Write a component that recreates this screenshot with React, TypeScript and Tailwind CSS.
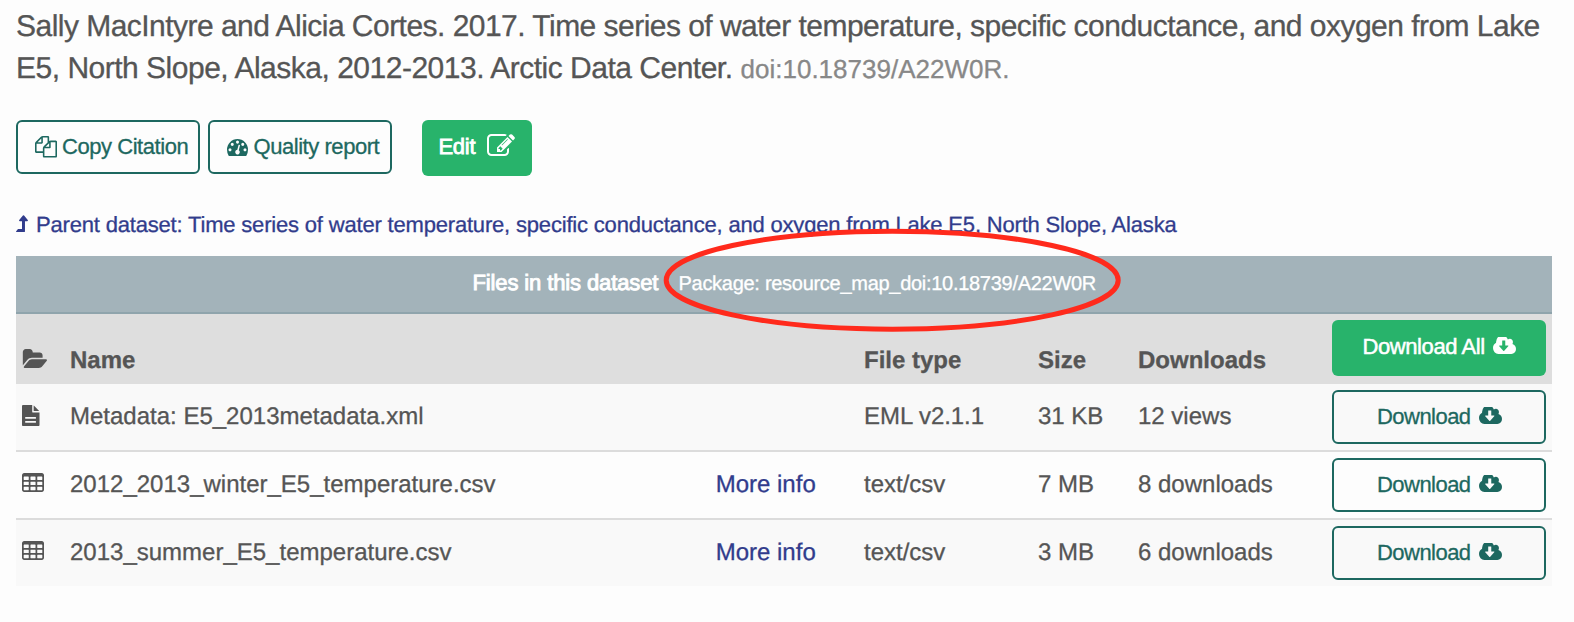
import React from 'react';

type GlyphProps = { box: string; className: string; d: string };

function Glyph({ box, className, d }: GlyphProps) {
  return (
    <svg viewBox={box} preserveAspectRatio="none" className={`block shrink-0 ${className}`} fill="currentColor" aria-hidden="true">
      <path d={d} />
    </svg>
  );
}

const COPY =
  'M1696 384q40 0 68 28t28 68v1216q0 40-28 68t-68 28h-960q-40 0-68-28t-28-68v-288h-544q-40 0-68-28t-28-68v-672q0-40 20-88t48-76l408-408q28-28 76-48t88-20h416q40 0 68 28t28 68v328q68-40 128-40h416zm-544 213l-299 299h299v-299zm-640-384l-299 299h299v-299zm196 647l316-316v-416h-384v416q0 40-28 68t-68 28h-416v640h512v-256q0-40 20-88t48-76zm956 804v-1152h-384v416q0 40-28 68t-68 28h-416v640h896z';
const GAUGE =
  'M384 1152q0-53-37.5-90.5t-90.5-37.5-90.5 37.5-37.5 90.5 37.5 90.5 90.5 37.5 90.5-37.5 37.5-90.5zm192-448q0-53-37.5-90.5t-90.5-37.5-90.5 37.5-37.5 90.5 37.5 90.5 90.5 37.5 90.5-37.5 37.5-90.5zm428 481l101-382q6-26-7.5-48.5t-38.5-29.5-48 6.5-30 39.5l-101 382q-60 5-107 43.5t-63 98.5q-20 77 20 146t117 89 146-20 89-117q16-60-6-117t-72-91zm660-33q0-53-37.5-90.5t-90.5-37.5-90.5 37.5-37.5 90.5 37.5 90.5 90.5 37.5 90.5-37.5 37.5-90.5zm-640-640q0-53-37.5-90.5t-90.5-37.5-90.5 37.5-37.5 90.5 37.5 90.5 90.5 37.5 90.5-37.5 37.5-90.5zm448 192q0-53-37.5-90.5t-90.5-37.5-90.5 37.5-37.5 90.5 37.5 90.5 90.5 37.5 90.5-37.5 37.5-90.5zm320 448q0 261-141 483-19 29-54 29h-1402q-35 0-54-29-141-221-141-483 0-182 71-348t191-286 286-191 348-71 348 71 286 191 191 286 71 348z';
const EDIT =
  'M888 1184l116-116-152-152-116 116v56h96v96h56zm440-720q-16-16-33 1l-350 350q-17 17-1 33t33-1l350-350q17-17 1-33zm80 594v190q0 119-84.5 203.5t-203.5 84.5h-832q-119 0-203.5-84.5t-84.5-203.5v-832q0-119 84.5-203.5t203.5-84.5h832q63 0 117 25 15 7 18 23 3 17-9 29l-49 49q-14 14-32 8-23-6-45-6h-832q-66 0-113 47t-47 113v832q0 66 47 113t113 47h832q66 0 113-47t47-113v-126q0-13 9-22l64-64q15-15 35-7t20 29zm-96-738l288 288-672 672h-288v-288zm444 132l-92 92-288-288 92-92q28-28 68-28t68 28l152 152q28 28 28 68t-28 68z';
const LEVEL_UP =
  'M1337 547q-18 37-57 37h-192v864q0 14-9 23t-23 9h-704q-21 0-29-18-8-20 4-35l160-192q9-11 25-11h320v-640h-192q-40 0-57-37-17-37 9-68l320-384q18-22 49-22t49 22l320 384q27 32 8 68z';
const FOLDER =
  'M1943 952q0 31-31 66l-336 396q-43 51-120.5 86.5t-143.5 35.5h-1088q-34 0-60.5-13t-26.5-43q0-31 31-66l336-396q43-51 120.5-86.5t143.5-35.5h1088q34 0 60.5 13t26.5 43zm-343-344v160h-832q-94 0-197 47.5t-164 119.5l-337 396-5 6q0-4-.5-12.5t-.5-12.5v-960q0-92 66-158t158-66h320q92 0 158 66t66 158v32h544q92 0 158 66t66 158z';
const FILE =
  'M1596 476q14 14 28 36h-472v-472q22 14 36 28zm-532 164h600v1056q0 40-28 68t-68 28h-1344q-40 0-68-28t-28-68v-1600q0-40 28-68t68-28h800v600q0 40 40 40zM440 1020q-40 0-40 40v80q0 40 40 40h880q40 0 40-40v-80q0-40-40-40zM440 1360q-40 0-40 40v80q0 40 40 40h880q40 0 40-40v-80q0-40-40-40z';
const CLOUD =
  'M1216 928q0-14-9-23t-23-9h-224v-352q0-13-9.5-22.5t-22.5-9.5h-192q-13 0-22.5 9.5t-9.5 22.5v352h-224q-13 0-22.5 9.5t-9.5 22.5q0 14 9 23l352 352q9 9 23 9t23-9l351-351q10-12 10-24zm640 224q0 159-112.5 271.5t-271.5 112.5h-1088q-185 0-316.5-131.5t-131.5-316.5q0-130 70-240t188-165q-2-30-2-43 0-212 150-362t362-150q156 0 285.5 87t188.5 231q71-62 166-62 106 0 181 75t75 181q0 76-41 138 130 31 213.5 135.5t83.5 238.5z';

const CELL = 'v192q0 32 32 32h320q32 0 32-32v-192q0-32-32-32h-320q-32 0-32 32z';
const TABLE =
  'M160 0h1344q66 0 113 47t47 113v1088q0 66-47 113t-113 47h-1344q-66 0-113-47t-47-113v-1088q0-66 47-113t113-47z' +
  [288, 672, 1056].map((y) => [128, 640, 1152].map((x) => `M${x} ${y}${CELL}`).join('')).join('');

const Cloud = ({ className }: { className: string }) => (
  <Glyph box="-64 256 1920 1280" className={`h-[17px] w-[23px] ${className}`} d={CLOUD} />
);
const FileIcon = () => (
  <svg viewBox="128 0 1536 1792" preserveAspectRatio="none" className="mt-0.5 block h-[21px] w-[17.5px]" fill="currentColor" fillRule="evenodd" aria-hidden="true">
    <path d={FILE} />
  </svg>
);
const TableIcon = () => <Glyph box="0 0 1664 1408" className="mt-0.5 h-[19px] w-[22px]" d={TABLE} />;

const rows = [
  { kind: 'file', name: 'Metadata: E5_2013metadata.xml', more: '', type: 'EML v2.1.1', size: '31 KB', count: '12 views' },
  { kind: 'table', name: '2012_2013_winter_E5_temperature.csv', more: 'More info', type: 'text/csv', size: '7 MB', count: '8 downloads' },
  { kind: 'table', name: '2013_summer_E5_temperature.csv', more: 'More info', type: 'text/csv', size: '3 MB', count: '6 downloads' },
];

const GRID = 'grid grid-cols-[48px_645px_149px_174px_100px_194px_214px] px-1.5 text-2xl leading-[27px] whitespace-nowrap';
const OUTLINE = 'flex h-[54px] rounded-md border-2 border-[#1d6860] text-[22px] leading-[25px] text-[#1d6860] whitespace-nowrap';

export default function App() {
  return (
    <div className="h-[622px] overflow-hidden bg-[#fdfdfd] px-4 pt-1.5 font-['Liberation_Sans',Arial,sans-serif] text-[#555] [-webkit-text-stroke:0.3px] [text-rendering:geometricPrecision]">
      <p className="text-[30px] leading-[42px] whitespace-nowrap">
        <span className="block tracking-[-0.53px]">
          Sally MacIntyre and Alicia Cortes. 2017. Time series of water temperature, specific conductance, and oxygen from Lake
        </span>
        <span className="flex items-baseline">
          <span className="tracking-[-0.495px]">E5, North Slope, Alaska, 2012-2013. Arctic Data Center.</span>
          <span className="ml-2 text-[26px] leading-[42px] text-[#888]">doi:10.18739/A22W0R.</span>
        </span>
      </p>

      <div className="mt-[30px] flex">
        <button className={`${OUTLINE} w-[184px] pt-3 pl-[17px] tracking-[-0.45px]`}>
          <Glyph box="0 0 1792 1792" className="mt-[2px] mr-[5px] h-[21.5px] w-[22px]" d={COPY} />
          Copy Citation
        </button>
        <button className={`${OUTLINE} ml-2 w-[184px] pt-3 pl-[16.5px] tracking-[-0.45px]`}>
          <Glyph box="0 256 1792 1408" className="mt-[5px] mr-[6px] h-[17px] w-[21px]" d={GAUGE} />
          Quality report
        </button>
        <button className="ml-[30px] flex h-14 w-[110px] rounded-md bg-[#28b36b] pt-3.5 pl-[16.5px] text-[22px] leading-[25px] tracking-[-0.3px] text-white [-webkit-text-stroke:0.8px]">
          Edit
          <Glyph box="0 128 1792 1408" className="ml-3 h-[22px] w-[28px]" d={EDIT} />
        </button>
      </div>

      <a className="mt-9 flex h-[25px] text-[22px] leading-[25px] tracking-[-0.183px] whitespace-nowrap text-[#313c8c]">
        <Glyph box="314 53 1036 1430" className="mt-[3px] mr-2 h-[17px] w-3" d={LEVEL_UP} />
        Parent dataset: Time series of water temperature, specific conductance, and oxygen from Lake E5, North Slope, Alaska
      </a>

      <section className="mt-[19px] w-[1536px]">
        <header className="relative flex h-[58px] items-baseline border-b-2 border-[#8fa4ac] bg-[#a3b3ba] pt-3.5 pl-[456.5px] whitespace-nowrap text-white">
          <span className="w-[206px] text-[22px] leading-[25px] tracking-[-0.12px] [-webkit-text-stroke:0.9px]">Files in this dataset</span>
          <span className="text-xl leading-[22px] tracking-[-0.285px]">Package: resource_map_doi:10.18739/A22W0R</span>
          <svg className="absolute top-[-28px] left-[647px] h-[104px] w-[458px]" viewBox="0 0 458 104" fill="none">
            <ellipse cx="229.2" cy="52.2" rx="226" ry="49" stroke="#ff2a1c" strokeWidth="5" />
          </svg>
        </header>

        <div className={`${GRID} h-[70px] bg-[#dedede] font-bold`}>
          <div className="pt-[35px]">
            <Glyph box="0 128 1943 1408" className="h-[19px] w-[25px]" d={FOLDER} />
          </div>
          <div className="pt-[33px]">Name</div>
          <div />
          <div className="pt-[33px]">File type</div>
          <div className="pt-[33px]">Size</div>
          <div className="pt-[33px]">Downloads</div>
          <button className="mt-1.5 flex h-14 rounded-md bg-[#28b36b] pt-3.5 pl-[30.5px] text-[22px] leading-[25px] font-normal tracking-[-0.41px] text-white [-webkit-text-stroke:0.5px]">
            Download All
            <Cloud className="mt-[3px] ml-2" />
          </button>
        </div>

        {rows.map((r, i) => (
          <div
            key={r.name}
            className={`${GRID} ${i === 0 ? 'h-[66px]' : 'h-[68px] border-t-2 border-[#dcdcdc]'} ${i === 1 ? 'bg-[#fdfdfd]' : 'bg-[#f9f9f9]'}`}
          >
            <div className="pt-[19px]">{r.kind === 'file' ? <FileIcon /> : <TableIcon />}</div>
            <div className="pt-[19px]">{r.name}</div>
            <a className="pt-[19px] pl-[0.7px] text-[#313c8c]">{r.more}</a>
            <div className={i === 0 ? 'pt-[19px] tracking-[-0.05px]' : 'pt-[19px]'}>{r.type}</div>
            <div className="pt-[19px]">{r.size}</div>
            <div className="pt-[19px]">{r.count}</div>
            <button className={`${OUTLINE} mt-1.5 pt-3 pl-[43px] tracking-[-0.54px]`}>
              Download
              <Cloud className="mt-[3px] ml-2" />
            </button>
          </div>
        ))}
      </section>
    </div>
  );
}
